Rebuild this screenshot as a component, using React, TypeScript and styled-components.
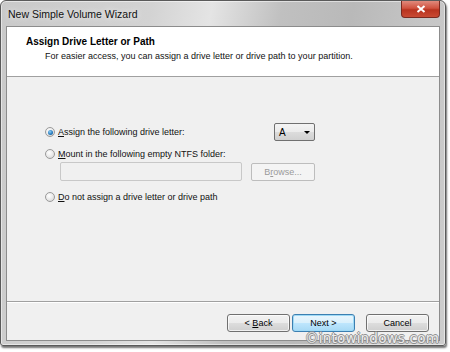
import styled, { createGlobalStyle } from "styled-components";

const GlobalStyle = createGlobalStyle`
  html, body {
    margin: 0;
    padding: 0;
    background: #ffffff;
  }
  body {
    font-family: "Liberation Sans", Arial, sans-serif;
    width: 450px;
    height: 352px;
    overflow: hidden;
  }
`;

const Window = styled.div`
  position: relative;
  box-sizing: border-box;
  width: 446px;
  height: 346px;
  display: flex;
  flex-direction: column;
  border: 1px solid #5a5a5a;
  border-radius: 6px 6px 3px 3px;
  padding: 0 5px 4px 5px;
  background: linear-gradient(
    100deg,
    #c9c9c9 0%,
    #d3d3d3 30%,
    #e4e4e4 42%,
    #c0c0c0 56%,
    #b9b9b9 70%,
    #c6c6c6 85%,
    #cdcdcd 100%
  );
  box-shadow: 1px 2px 2px rgba(0, 0, 0, 0.55), inset 0 0 0 1px rgba(255, 255, 255, 0.5);
`;

const TitleBar = styled.div`
  height: 25px;
  display: flex;
  align-items: center;
  justify-content: space-between;
  padding-left: 2px;
`;

const Caption = styled.span`
  font-family: "Liberation Sans", Arial, sans-serif;
  font-size: 10.5px;
  color: #111;
  text-shadow: 0 0 6px rgba(255, 255, 255, 0.9);
`;

const CloseButton = styled.div`
  width: 39px;
  height: 17px;
  box-sizing: border-box;
  border: 1px solid #7a2a20;
  border-top: none;
  border-radius: 0 0 4px 4px;
  background: linear-gradient(180deg, #e08a7c 0%, #d0523f 45%, #b8331f 55%, #c94a33 100%);
  display: flex;
  align-items: center;
  justify-content: center;
  align-self: flex-start;
`;

const Client = styled.div`
  flex: 1;
  display: flex;
  flex-direction: column;
  border: 1px solid #8c8c8c;
  background: #f0f0f0;
`;

const Header = styled.div`
  height: 50px;
  box-sizing: border-box;
  background: #ffffff;
  border-bottom: 1px solid #a0a0a0;
  padding: 9px 0 0 19px;
`;

const HeaderTitle = styled.div`
  font-weight: bold;
  font-size: 10px;
  color: #000;
  line-height: 12px;
`;

const HeaderText = styled.div`
  font-size: 9px;
  color: #111;
  line-height: 12px;
  margin-top: 2px;
  padding-left: 19px;
`;

const Body = styled.div`
  flex: 1;
  padding: 46px 0 0 38px;
`;

const Options = styled.div`
  width: 270px;
  display: flex;
  flex-direction: column;
`;

const Row = styled.div<{ $top?: number; $height?: number }>`
  display: flex;
  align-items: center;
  justify-content: space-between;
  margin-top: ${(p) => p.$top ?? 0}px;
  height: ${(p) => p.$height ?? 14}px;
`;

const Option = styled.label`
  display: flex;
  align-items: center;
  gap: 3px;
  font-size: 9px;
  color: #111;
`;

const Radio = styled.span<{ $checked?: boolean }>`
  box-sizing: border-box;
  width: 10px;
  height: 10px;
  border-radius: 50%;
  border: 1px solid #9a9a9a;
  background: radial-gradient(circle at 40% 35%, #ffffff 0%, #e8e8e8 55%, #cfcfcf 100%);
  display: flex;
  align-items: center;
  justify-content: center;
  &::after {
    content: "";
    display: ${(p) => (p.$checked ? "block" : "none")};
    width: 5px;
    height: 5px;
    border-radius: 50%;
    background: radial-gradient(circle at 40% 35%, #8ed0f5 0%, #2b7dc0 55%, #14507f 100%);
  }
`;

const Key = styled.span`
  text-decoration: underline;
`;

const Combo = styled.div`
  box-sizing: border-box;
  width: 41px;
  height: 18px;
  border: 1px solid #707070;
  border-radius: 2px;
  background: linear-gradient(180deg, #f4f4f4 0%, #ebebeb 50%, #dcdcdc 51%, #d0d0d0 100%);
  display: flex;
  align-items: center;
  justify-content: space-between;
  padding: 0 4px 0 4px;
  font-size: 10px;
  color: #000;
`;

const Arrow = styled.span`
  width: 0;
  height: 0;
  border-left: 3px solid transparent;
  border-right: 3px solid transparent;
  border-top: 3px solid #000;
`;

const TextBox = styled.div`
  box-sizing: border-box;
  width: 182px;
  height: 19px;
  margin-left: 15px;
  border: 1px solid #c8c8c8;
  border-radius: 2px;
  background: #f0f0f0;
`;

const DisabledButton = styled.div`
  box-sizing: border-box;
  width: 64px;
  height: 18px;
  border: 1px solid #bdbdbd;
  border-radius: 2px;
  background: #f4f4f4;
  color: #9a9a9a;
  font-size: 9px;
  display: flex;
  align-items: center;
  justify-content: center;
`;

const Footer = styled.div`
  height: 39px;
  box-sizing: border-box;
  border-top: 1px solid #a0a0a0;
  box-shadow: inset 0 1px 0 #ffffff;
  display: flex;
  justify-content: flex-end;
  padding: 12px 10px 0 0;
`;

const Button = styled.div<{ $default?: boolean; $gap?: number }>`
  box-sizing: border-box;
  width: 63px;
  height: 18px;
  margin-left: ${(p) => p.$gap ?? 0}px;
  border: 1px solid ${(p) => (p.$default ? "#3c7fb1" : "#707070")};
  border-radius: 3px;
  background: ${(p) =>
    p.$default
      ? "linear-gradient(180deg, #eaf6fd 0%, #d9f0fc 50%, #bee6fd 51%, #a7d9f5 100%)"
      : "linear-gradient(180deg, #f2f2f2 0%, #ebebeb 50%, #dddddd 51%, #cfcfcf 100%)"};
  box-shadow: inset 0 0 0 1px ${(p) => (p.$default ? "#9fdaf6" : "rgba(255,255,255,0.7)")};
  font-size: 9px;
  color: #000;
  display: flex;
  align-items: center;
  justify-content: center;
  white-space: pre;
`;

const Watermark = styled.div`
  position: absolute;
  right: 6px;
  bottom: -1px;
  font-family: "DejaVu Sans", Verdana, sans-serif;
  font-size: 13.5px;
  letter-spacing: 0.2px;
  color: #ececec;
  text-shadow: -1px 0 0 #8f8f8f, 1px 0 0 #8f8f8f, 0 -1px 0 #8f8f8f, 0 1px 0 #8f8f8f;
`;

export default function App() {
  return (
    <>
      <GlobalStyle />
      <Window>
        <TitleBar>
          <Caption>New Simple Volume Wizard</Caption>
          <CloseButton>
            <svg width="10" height="8" viewBox="0 0 10 8">
              <path d="M1.5 1 L8.5 7 M8.5 1 L1.5 7" stroke="#fff" strokeWidth="2" />
            </svg>
          </CloseButton>
        </TitleBar>
        <Client>
          <Header>
            <HeaderTitle>Assign Drive Letter or Path</HeaderTitle>
            <HeaderText>
              For easier access, you can assign a drive letter or drive path to your partition.
            </HeaderText>
          </Header>
          <Body>
            <Options>
              <Row $height={18}>
                <Option>
                  <Radio $checked />
                  <span>
                    <Key>A</Key>ssign the following drive letter:
                  </span>
                </Option>
                <Combo>
                  A
                  <Arrow />
                </Combo>
              </Row>
              <Row $top={6}>
                <Option>
                  <Radio />
                  <span>
                    <Key>M</Key>ount in the following empty NTFS folder:
                  </span>
                </Option>
              </Row>
              <Row $top={1} $height={19}>
                <TextBox />
                <DisabledButton>
                  B<Key>r</Key>owse...
                </DisabledButton>
              </Row>
              <Row $top={9}>
                <Option>
                  <Radio />
                  <span>
                    <Key>D</Key>o not assign a drive letter or drive path
                  </span>
                </Option>
              </Row>
            </Options>
          </Body>
          <Footer>
            <Button>
              {"< "}
              <Key>B</Key>ack
            </Button>
            <Button $default $gap={2}>
              Next &gt;
            </Button>
            <Button $gap={11}>Cancel</Button>
          </Footer>
        </Client>
        <Watermark>©intowindows.com</Watermark>
      </Window>
    </>
  );
}
